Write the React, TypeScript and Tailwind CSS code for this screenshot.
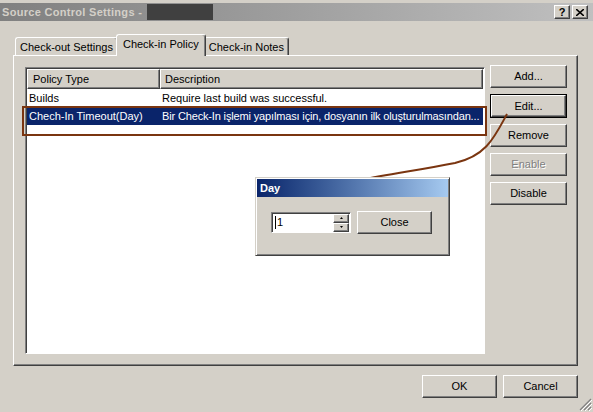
import React from 'react';

const raised =
  'border border-t-white border-l-white border-b-[#404040] border-r-[#404040] shadow-[inset_-1px_-1px_#808080]';
const sunken =
  'border border-t-[#808080] border-l-[#808080] border-b-white border-r-white shadow-[inset_1px_1px_#404040]';

function Button({ label, disabled, isDefault, className = '' }: { label: string; disabled?: boolean; isDefault?: boolean; className?: string }) {
  const face = (
    <div className={`${raised} flex h-full w-full items-center justify-center bg-[#d4d0c8]`}>
      <span className={disabled ? 'text-[#808080] [text-shadow:1px_1px_#ffffff]' : 'text-black'}>{label}</span>
    </div>
  );
  if (isDefault) {
    return <div className={`border border-black ${className}`}>{face}</div>;
  }
  return <div className={className}>{face}</div>;
}

function Tab({ label, active }: { label: string; active?: boolean }) {
  return (
    <div
      className={`flex items-center rounded-t-[3px] border-l border-t border-r border-l-white border-t-white border-r-[#404040] bg-[#d4d0c8] shadow-[inset_-1px_0_#808080] ${
        active ? 'relative z-10 -mx-[2px] h-[22px] px-[6px] pb-[3px]' : 'mt-[2px] h-[19px] px-[4px]'
      }`}
    >
      {label}
    </div>
  );
}

export default function App() {
  return (
    <div className="relative h-[412px] w-[593px] overflow-hidden bg-[#d4d0c8] text-[11px] text-black [font-family:'Liberation_Sans',Tahoma,Arial,sans-serif]">
      {/* title bar */}
      <div className="mt-[3px] flex h-[18px] items-center bg-gradient-to-r from-[#808080] to-[#c0c0c0] pl-[2px] pr-[5px]">
        <span className="font-bold tracking-[0.3px] text-[#d4d0c8]">Source Control Settings -</span>
        <div className="ml-[5px] h-[16px] w-[66px] bg-[#404040]" />
        <div className="ml-auto flex gap-[2px]">
          <div className={`${raised} flex h-[14px] w-[16px] items-center justify-center bg-[#d4d0c8] text-[11px] font-bold leading-none`}>?</div>
          <div className={`${raised} flex h-[14px] w-[16px] items-center justify-center bg-[#d4d0c8]`}>
            <svg width="8" height="7" viewBox="0 0 8 7">
              <path d="M0 0 L8 7 M8 0 L0 7" stroke="black" strokeWidth="1.6" />
            </svg>
          </div>
        </div>
      </div>

      {/* tabs */}
      <div className="mt-[13px] flex items-end pl-[15px]">
        <Tab label="Check-out Settings" />
        <Tab label="Check-in Policy" active />
        <Tab label="Check-in Notes" />
      </div>

      {/* tab page */}
      <div className="relative -mt-[1px] ml-[13px] flex h-[311px] w-[565px] gap-[5px] border border-t-white border-l-white border-b-[#404040] border-r-[#404040] pl-[11px] pt-[11px] shadow-[inset_-1px_-1px_#808080]">
        <div className={`${sunken} h-[287px] w-[460px] bg-white p-[1px]`}>
          <div className="flex h-[20px]">
            <div className={`${raised} flex w-[133px] items-center bg-[#d4d0c8] pl-[5px]`}>Policy Type</div>
            <div className={`${raised} flex flex-1 items-center bg-[#d4d0c8] pl-[4px]`}>Description</div>
          </div>
          <div className="flex h-[18px] items-center">
            <div className="w-[133px] pl-[2px]">Builds</div>
            <div className="pl-[2px]">Require last build was successful.</div>
          </div>
          <div className="flex h-[18px] items-center bg-[#0a246a] text-white">
            <div className="w-[133px] pl-[2px]">Chech-In Timeout(Day)</div>
            <div className="min-w-0 flex-1 overflow-hidden whitespace-nowrap pl-[2px] tracking-[-0.15px]">
              Bir Check-In işlemi yapılması için, dosyanın ilk oluşturulmasından...
            </div>
          </div>
        </div>
        <div className="-mt-[2px] flex w-[77px] flex-col gap-[6px]">
          <Button label="Add..." className="h-[23px]" />
          <Button label="Edit..." isDefault className="h-[24px]" />
          <Button label="Remove" className="h-[23px]" />
          <Button label="Enable" disabled className="h-[23px]" />
          <Button label="Disable" className="h-[23px]" />
        </div>
      </div>

      {/* bottom buttons */}
      <div className="mt-[9px] flex justify-end gap-[6px] pr-[15px]">
        <Button label="OK" className="h-[23px] w-[75px]" />
        <Button label="Cancel" className="h-[23px] w-[75px]" />
      </div>

      {/* highlight rectangle */}
      <div className="pointer-events-none absolute left-[22px] top-[106px] h-[30px] w-[465px] border-2 border-[#7a3510]" />

      {/* connector */}
      <svg className="pointer-events-none absolute left-0 top-0" width="593" height="412">
        <path d="M507 114 C 494 138, 486 156, 455 163 C 420 170, 390 174, 361 180" fill="none" stroke="#7a3510" strokeWidth="2" />
      </svg>

      {/* Day dialog */}
      <div className="absolute left-[255px] top-[177px] h-[79px] w-[195px] border border-t-[#d4d0c8] border-l-[#d4d0c8] border-b-[#404040] border-r-[#404040] bg-[#d4d0c8] p-[1px] shadow-[inset_1px_1px_#ffffff,inset_-1px_-1px_#808080]">
        <div className="flex h-[18px] items-center bg-gradient-to-r from-[#0a246a] to-[#a6caf0] pl-[3px] font-bold text-white">Day</div>
        <div className="mt-[14px] flex items-center gap-[6px] pl-[14px]">
          <div className={`${sunken} flex h-[21px] w-[80px] items-center bg-white pl-[3px]`}>
            <span className="flex items-center">
              <span className="h-[13px] w-[1px] bg-black" />
              <span className="ml-[1px]">1</span>
            </span>
            <div className="ml-auto mr-[1px] flex flex-col">
              <div className={`${raised} flex h-[9px] w-[16px] items-center justify-center bg-[#d4d0c8]`}>
                <svg width="3" height="2" viewBox="0 0 3 2"><path d="M1.5 0 L3 2 L0 2 Z" fill="black" /></svg>
              </div>
              <div className={`${raised} flex h-[9px] w-[16px] items-center justify-center bg-[#d4d0c8]`}>
                <svg width="3" height="2" viewBox="0 0 3 2"><path d="M0 0 L3 0 L1.5 2 Z" fill="black" /></svg>
              </div>
            </div>
          </div>
          <Button label="Close" className="h-[23px] w-[75px]" />
        </div>
      </div>

      {/* resize grip */}
      <svg className="absolute bottom-[1px] right-[1px]" width="13" height="13" viewBox="0 0 13 13">
        <path d="M12 1 L1 12 M12 5 L5 12 M12 9 L9 12" stroke="#808080" strokeWidth="1.2" />
        <path d="M13 2 L2 13 M13 6 L6 13 M13 10 L10 13" stroke="#ffffff" strokeWidth="1" />
      </svg>
    </div>
  );
}
